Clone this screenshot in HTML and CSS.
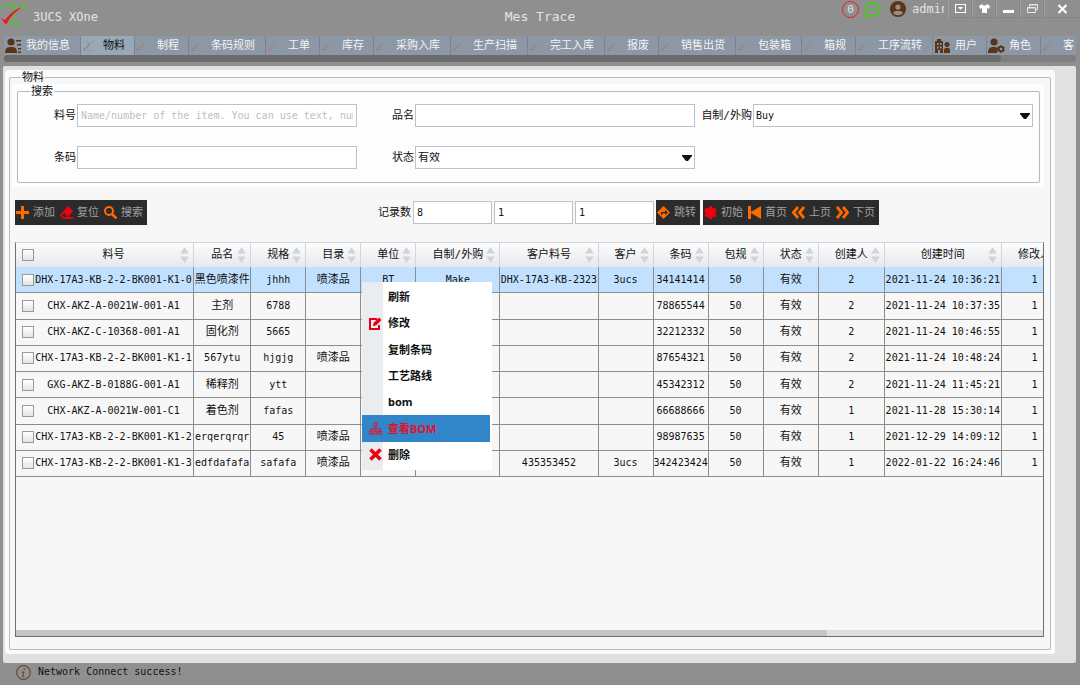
FILE: index.html
```html
<!DOCTYPE html>
<html lang="zh-CN">
  <head>
    <meta charset="utf-8" />
    <title>Mes Trace</title>
    <meta name="viewport" content="width=device-width,initial-scale=1" />
    <link rel="stylesheet" href="styles.css">
  </head>
  <body>
    <!-- Shared icons -->
    <svg class="sprite" aria-hidden="true">
      <symbol id="i-logo" viewBox="0 0 26 24">
        <path d="M1 6C4 2 10 0 12 2c1 3 2 5 0 10-2 6-2 9 1 10 3 0 5-2 6-4" fill="none" stroke="var(--leaf, #52c234)" stroke-width="1.800"/>
        <path d="M12 10C13 6 17 3 21 2" fill="none" stroke="var(--leaf, #52c234)" stroke-width="1.200"/>
        <path d="M20 3h6M23 0v5M21 4l3 2" fill="none" stroke="var(--leaf, #52c234)" stroke-width="1"/>
        <path d="M0 15l4 2C9 11 14 6 21 4 14 9 8 15 5 22z" fill="var(--tick, #f01818)"/>
      </symbol>
      <symbol id="i-sort" viewBox="0 0 9 17">
        <path d="M4.500 0L9 7H0zM0 10h9l-4.500 7z" fill="#d3d3d5"/>
      </symbol>
      <symbol id="i-down" viewBox="0 0 10 6"><path d="M0 0h10v1L6 6H4L0 1z" fill="#111"/></symbol>
    </svg>

    <!-- Title bar -->
    <header class="titlebar">
      <div class="titlebar__brand">
        <svg class="titlebar__logo"><use href="#i-logo"/></svg>
        <span>3UCS XOne</span>
      </div>
      <h1 class="titlebar__title">Mes Trace</h1>
      <div class="titlebar__tools">
        <span class="count">0</span>
        <svg width="17" height="17" viewBox="0 0 17 17"><path d="M1 15l1-3C0 6 3 2 8.500 2 13 2 16 5 16 8.500S13 15 8.500 15z" fill="none" stroke="#4fc62c" stroke-width="1.800"/><circle cx="5" cy="8.500" r="1.200" fill="#4fc62c"/><circle cx="8.500" cy="8.500" r="1.200" fill="#4fc62c"/><circle cx="12" cy="8.500" r="1.200" fill="#4fc62c"/></svg>
        <svg class="avatar" width="16" height="16" viewBox="0 0 16 16"><circle cx="8" cy="8" r="8" fill="#5b3416"/><circle cx="8" cy="6" r="2.600" fill="#9a8c80"/><path d="M3 12c1-3 9-3 10 0-2 3-8 3-10 0z" fill="#9a8c80"/></svg>
        <span class="user">admin</span>
        <button class="win" aria-label="Menu"><svg width="11" height="9" viewBox="0 0 11 9"><rect x=".5" y=".5" width="10" height="8" fill="none" stroke="#fff"/><path d="M3 3h5L5.500 6z" fill="#fff"/></svg></button>
        <button class="win" aria-label="Skin"><svg width="11" height="9" viewBox="0 0 11 9"><path d="M3 0c1 2 4 2 5 0l3 2-1 3-2-1v5H3V4L1 5 0 2z" fill="#fff"/></svg></button>
        <button class="win" aria-label="Minimize"><svg width="11" height="9" viewBox="0 0 11 9"><path d="M0 6h11v3H0z" fill="#fff"/></svg></button>
        <button class="win" aria-label="Restore"><svg width="11" height="9" viewBox="0 0 11 9"><path d="M2.500 3V.5h8v5H9M2 1h9M.5 3.500h8v5h-8zM0 4h9" fill="none" stroke="#e6e6e6"/></svg></button>
        <button class="win win--close" aria-label="Close"><svg width="11" height="10" viewBox="0 0 11 10"><path d="M1.500 1l8 8M9.500 1l-8 8" stroke="#fff" stroke-width="2"/></svg></button>
      </div>
    </header>

    <!-- Module tabs -->
    <nav class="tabs">
      <a href="#" class="tab tab--wide"><svg class="tab__icon tab__icon--full" viewBox="0 0 17 16"><g fill="#5b3416"><circle cx="6" cy="4" r="3.600"/><path d="M0 15c0-5 2-6 6-6s6 1 6 6zM11 2h5v1.500h-5zM12 6h4v1.500h-4zM13 10h3v1.500h-3zM13 13.500h3V15h-3z"/></g></svg>我的信息</a>
      <a href="#" class="tab tab--active"><svg class="tab__icon"><use href="#i-logo"/></svg>物料</a>
      <a href="#" class="tab"><svg class="tab__icon"><use href="#i-logo"/></svg>制程</a>
      <a href="#" class="tab tab--wide"><svg class="tab__icon"><use href="#i-logo"/></svg>条码规则</a>
      <a href="#" class="tab"><svg class="tab__icon"><use href="#i-logo"/></svg>工单</a>
      <a href="#" class="tab"><svg class="tab__icon"><use href="#i-logo"/></svg>库存</a>
      <a href="#" class="tab tab--wide"><svg class="tab__icon"><use href="#i-logo"/></svg>采购入库</a>
      <a href="#" class="tab tab--wide"><svg class="tab__icon"><use href="#i-logo"/></svg>生产扫描</a>
      <a href="#" class="tab tab--wide"><svg class="tab__icon"><use href="#i-logo"/></svg>完工入库</a>
      <a href="#" class="tab"><svg class="tab__icon"><use href="#i-logo"/></svg>报废</a>
      <a href="#" class="tab tab--wide"><svg class="tab__icon"><use href="#i-logo"/></svg>销售出货</a>
      <a href="#" class="tab tab--wide"><svg class="tab__icon"><use href="#i-logo"/></svg>包装箱</a>
      <a href="#" class="tab"><svg class="tab__icon"><use href="#i-logo"/></svg>箱规</a>
      <a href="#" class="tab tab--wide"><svg class="tab__icon"><use href="#i-logo"/></svg>工序流转</a>
      <a href="#" class="tab"><svg class="tab__icon tab__icon--full" viewBox="0 0 17 16"><path d="M1 15V3h2V1h4v2h2v12z" fill="#5b3416"/><path d="M3 5h1.500v2H3zM6 5h1.500v2H6zM3 8.500h1.500v2H3zM6 8.500h1.500v2H6zM4 12h2v3H4z" fill="#8e9baa"/><g fill="#5b3416"><circle cx="13" cy="6.500" r="2.500"/><path d="M10 15v-3c0-3 6-3 6 0v3z"/></g></svg>用户</a>
      <a href="#" class="tab"><svg class="tab__icon tab__icon--full" viewBox="0 0 17 16"><g fill="#5b3416"><circle cx="6" cy="4" r="3.600"/><path d="M0 15c0-5 2-6 6-6 2 0 3 .5 4 1.500L9 15z"/></g><circle cx="13" cy="11" r="2.300" fill="none" stroke="#5b3416" stroke-width="2"/><path d="M13 7v8M9.500 9l7 4M9.500 13l7-4" stroke="#5b3416" stroke-width="1.200"/><circle cx="13" cy="11" r="1.300" fill="#8e9baa"/></svg>角色</a>
      <a href="#" class="tab"><svg class="tab__icon"><use href="#i-logo"/></svg>客</a>
    </nav>
    <div class="tabs-scroll"><div class="tabs-scroll__thumb"></div></div>

    <main class="panel">
      <div class="frame">
        <fieldset class="group group--main">
          <legend>物料</legend>

          <!-- Search form -->
          <div class="search-wrap">
            <fieldset class="group">
              <legend>搜索</legend>
              <div class="search">
                <label for="item-no">料号</label>
                <input class="field" id="item-no" type="text" placeholder="Name/number of the item. You can use text, numbers">
                <label for="item-name">品名</label>
                <input class="field" id="item-name" type="text">
                <label for="source">自制/外购</label>
                <div class="select">
                  <select class="field" id="source"><option>Buy</option><option>Make</option></select>
                  <svg class="select__arrow"><use href="#i-down"/></svg>
                </div>
                <label for="barcode">条码</label>
                <input class="field" id="barcode" type="text">
                <label for="status">状态</label>
                <div class="select">
                  <select class="field field--zh" id="status"><option>有效</option><option>无效</option></select>
                  <svg class="select__arrow"><use href="#i-down"/></svg>
                </div>
              </div>
            </fieldset>
          </div>

          <!-- Toolbar -->
          <div class="toolbar">
            <div class="btns">
              <button class="btn"><svg class="btn__icon" viewBox="0 0 13 13"><path d="M5 0h3v5h5v3H8v5H5V8H0V5h5z" fill="#ff6a00"/></svg>添加</button>
              <button class="btn"><svg class="btn__icon" viewBox="0 0 13 13"><path d="M8 0l5 5-5 6h5v2H3L0 9z" fill="#f0000c"/><path d="M4 7l3 3-1.500 1.500H4L2 9.500z" fill="#2b2b2b"/></svg>复位</button>
              <button class="btn"><svg class="btn__icon" viewBox="0 0 13 13"><circle cx="5" cy="5" r="4" fill="none" stroke="#ff6a00" stroke-width="2"/><path d="M8 8l4.500 4.500" stroke="#ff6a00" stroke-width="2.500"/></svg>搜索</button>
            </div>
            <div class="pager">
              <label for="total">记录数</label>
              <input class="field" id="total" type="text" value="8">
              <input class="field" type="text" value="1" aria-label="页数">
              <input class="field" type="text" value="1" aria-label="页码">
              <div class="btns">
                <button class="btn"><svg class="btn__icon" viewBox="0 0 13 13"><path d="M6.500 0L13 6.500 6.500 13 0 6.500z" fill="#ff6a00"/><path d="M4 9V6h4V4l3 2.500L8 9V7.200H5.300V9z" fill="#2b2b2b"/></svg>跳转</button>
              </div>
            </div>
            <div class="btns">
              <button class="btn"><svg class="btn__icon" viewBox="0 0 13 13"><circle cx="6.500" cy="6.500" r="5.200" fill="#f0000c"/><path d="M6.500 0v13M1 3l11 7M1 10l11-7" stroke="#f0000c" stroke-width="3"/></svg>初始</button>
              <button class="btn"><svg class="btn__icon" viewBox="0 0 13 13"><path d="M0 0h3v6l10-6v13L3 7v6H0z" fill="#ff6a00"/></svg>首页</button>
              <button class="btn"><svg class="btn__icon" viewBox="0 0 13 13"><path d="M6 1L1.500 6.500 6 12M12 1L7.500 6.500 12 12" fill="none" stroke="#ff6a00" stroke-width="2.800"/></svg>上页</button>
              <button class="btn"><svg class="btn__icon" viewBox="0 0 13 13"><path d="M1 1l4.500 5.500L1 12M7 1l4.500 5.500L7 12" fill="none" stroke="#ff6a00" stroke-width="2.800"/></svg>下页</button>
            </div>
          </div>

          <!-- Item list -->
          <div class="grid">
            <div class="grid__view">
              <table class="table">
                <colgroup>
                  <col class="c-no"><col class="c-name"><col class="c-s"><col class="c-s"><col class="c-s"><col class="c-make"><col class="c-cust"><col class="c-s"><col class="c-s"><col class="c-s"><col class="c-s"><col class="c-by"><col class="c-time"><col class="c-by">
                </colgroup>
                <thead>
                  <tr>
                    <th class="pick"><span><input type="checkbox" aria-label="全选"><b>料号</b></span><svg class="sort"><use href="#i-sort"/></svg></th>
                    <th>品名<svg class="sort"><use href="#i-sort"/></svg></th>
                    <th>规格<svg class="sort"><use href="#i-sort"/></svg></th>
                    <th>目录<svg class="sort"><use href="#i-sort"/></svg></th>
                    <th>单位<svg class="sort"><use href="#i-sort"/></svg></th>
                    <th>自制/外购<svg class="sort"><use href="#i-sort"/></svg></th>
                    <th>客户料号<svg class="sort"><use href="#i-sort"/></svg></th>
                    <th>客户<svg class="sort"><use href="#i-sort"/></svg></th>
                    <th>条码<svg class="sort"><use href="#i-sort"/></svg></th>
                    <th>包规<svg class="sort"><use href="#i-sort"/></svg></th>
                    <th>状态<svg class="sort"><use href="#i-sort"/></svg></th>
                    <th>创建人<svg class="sort"><use href="#i-sort"/></svg></th>
                    <th>创建时间<svg class="sort"><use href="#i-sort"/></svg></th>
                    <th>修改人</th>
                  </tr>
                </thead>
                <tbody>
                  <tr class="selected"><td class="pick"><label><input type="checkbox"><b>DHX-17A3-KB-2-2-BK001-K1-0</b></label></td><td class="zh">黑色喷漆件</td><td>jhhh</td><td class="zh">喷漆品</td><td>BT</td><td>Make</td><td>DHX-17A3-KB-2323</td><td>3ucs</td><td>34141414</td><td>50</td><td class="zh">有效</td><td>2</td><td>2021-11-24 10:36:21</td><td>1</td></tr>
                  <tr><td class="pick"><label><input type="checkbox"><b>CHX-AKZ-A-0021W-001-A1</b></label></td><td class="zh">主剂</td><td>6788</td><td></td><td></td><td></td><td></td><td></td><td>78865544</td><td>50</td><td class="zh">有效</td><td>2</td><td>2021-11-24 10:37:35</td><td>1</td></tr>
                  <tr><td class="pick"><label><input type="checkbox"><b>CHX-AKZ-C-10368-001-A1</b></label></td><td class="zh">固化剂</td><td>5665</td><td></td><td></td><td></td><td></td><td></td><td>32212332</td><td>50</td><td class="zh">有效</td><td>2</td><td>2021-11-24 10:46:55</td><td>1</td></tr>
                  <tr><td class="pick"><label><input type="checkbox"><b>CHX-17A3-KB-2-2-BK001-K1-1</b></label></td><td>567ytu</td><td>hjgjg</td><td class="zh">喷漆品</td><td></td><td></td><td></td><td></td><td>87654321</td><td>50</td><td class="zh">有效</td><td>2</td><td>2021-11-24 10:48:24</td><td>1</td></tr>
                  <tr><td class="pick"><label><input type="checkbox"><b>GXG-AKZ-B-0188G-001-A1</b></label></td><td class="zh">稀释剂</td><td>ytt</td><td></td><td></td><td></td><td></td><td></td><td>45342312</td><td>50</td><td class="zh">有效</td><td>2</td><td>2021-11-24 11:45:21</td><td>1</td></tr>
                  <tr><td class="pick"><label><input type="checkbox"><b>CHX-AKZ-A-0021W-001-C1</b></label></td><td class="zh">着色剂</td><td>fafas</td><td></td><td></td><td></td><td></td><td></td><td>66688666</td><td>50</td><td class="zh">有效</td><td>1</td><td>2021-11-28 15:30:14</td><td>1</td></tr>
                  <tr><td class="pick"><label><input type="checkbox"><b>CHX-17A3-KB-2-2-BK001-K1-2</b></label></td><td>erqerqrqr</td><td>45</td><td class="zh">喷漆品</td><td></td><td></td><td></td><td></td><td>98987635</td><td>50</td><td class="zh">有效</td><td>1</td><td>2021-12-29 14:09:12</td><td>1</td></tr>
                  <tr><td class="pick"><label><input type="checkbox"><b>CHX-17A3-KB-2-2-BK001-K1-3</b></label></td><td>edfdafafa</td><td>safafa</td><td class="zh">喷漆品</td><td></td><td></td><td>435353452</td><td>3ucs</td><td>342423424</td><td>50</td><td class="zh">有效</td><td>1</td><td>2022-01-22 16:24:46</td><td>1</td></tr>
                </tbody>
              </table>
            </div>
            <div class="grid__scroll"><div class="grid__thumb"></div></div>

            <!-- Context menu -->
            <div class="menu" role="menu">
              <button class="menu__item" role="menuitem"><span class="menu__icon"></span>刷新</button>
              <button class="menu__item" role="menuitem"><span class="menu__icon"><svg width="13" height="13" viewBox="0 0 13 13"><path d="M8 2H1v10h9V8" fill="none" stroke="#e60012" stroke-width="2"/><path d="M4 9l.5-3L10 .5 12.500 3 7 8.500z" fill="#e60012"/></svg></span>修改</button>
              <button class="menu__item" role="menuitem"><span class="menu__icon"></span>复制条码</button>
              <button class="menu__item" role="menuitem"><span class="menu__icon"></span>工艺路线</button>
              <button class="menu__item" role="menuitem"><span class="menu__icon"></span>bom</button>
              <button class="menu__item menu__item--active" role="menuitem"><span class="menu__icon"><svg width="13" height="13" viewBox="0 0 13 13"><g fill="none" stroke="#d0203c" stroke-width="1.200"><rect x="5" y="1" width="3" height="3"/><path d="M6.500 4v5M2 9V6.500h9V9"/><rect x=".6" y="9" width="2.800" height="3"/><rect x="5.100" y="9" width="2.800" height="3"/><rect x="9.600" y="9" width="2.800" height="3"/></g></svg></span>查看BOM</button>
              <button class="menu__item" role="menuitem"><span class="menu__icon"><svg width="13" height="13" viewBox="0 0 13 13"><path d="M1.500 1.500l10 10M11.500 1.500l-10 10" stroke="#f0000c" stroke-width="3.600"/></svg></span>删除</button>
            </div>
          </div>
        </fieldset>
      </div>
    </main>

    <footer class="status">
      <svg width="15" height="15" viewBox="0 0 15 15"><circle cx="7.500" cy="7.500" r="6.800" fill="none" stroke="#6b4a2c" stroke-width="1.200"/><path d="M8 3.500h1.500L9 5H7.600zM6 6.500h2.600L7.500 11h1L8 12H6l1-4H5.800z" fill="#6b4a2c"/></svg>
      <span>Network Connect success!</span>
    </footer>
  </body>
</html>
```
FILE: styles.css
```css
/* Base */
html { box-sizing: border-box; }
*, *:before, *:after { box-sizing: inherit; }
body {
  margin: 0;
  min-height: 100vh;
  display: flex;
  flex-direction: column;
  overflow-x: hidden;
  background: #8f8f8f;
  color: #111;
  font: 11px/12px "DejaVu Sans Mono", "Noto Sans CJK SC", monospace;
}
a { text-decoration: none; }
button, input, select {
  font: inherit;
  color: inherit;
  margin: 0;
}
button {
  border: 0;
  padding: 0;
  background: none;
}
.sprite {
  position: absolute;
  width: 0;
  height: 0;
}

/* Title bar */
.titlebar {
  display: grid;
  grid-template-columns: 1fr auto 1fr;
  height: 36px;
  color: #e4e4e4;
}
.titlebar__brand {
  display: flex;
  align-items: center;
  gap: 6px;
  padding: 0 0 6px 1px;
  font-size: 12px;
}
.titlebar__brand span { padding-top: 4px; }
.titlebar__logo {
  width: 26px;
  height: 24px;
}
.titlebar__title {
  margin: 0;
  font-size: 13px;
  font-weight: normal;
  line-height: 34px;
}
.titlebar__tools {
  display: flex;
  justify-content: flex-end;
  align-items: center;
  height: 18px;
}
.count {
  width: 17px;
  height: 17px;
  margin-right: 5px;
  border: 1px solid #f01818;
  border-radius: 50%;
  text-align: center;
  line-height: 15px;
}
.avatar { margin: 0 6px 0 9px; }
.user {
  width: 32px;
  margin-right: 4px;
  overflow: hidden;
  font-size: 12px;
}
.win {
  width: 24px;
  height: 18px;
  display: flex;
  align-items: center;
  justify-content: center;
  border: 1px solid #868686;
  border-left-color: #a2a2a2;
  border-top: 0;
}
.win--close {
  width: 36px;
  border-right: 0;
}

/* Tabs */
.tabs {
  display: flex;
  height: 19px;
  margin: 0 4px;
  overflow: hidden;
}
.tab {
  flex: none;
  display: flex;
  align-items: center;
  padding-right: 9px;
  background: #8c98a5;
  border-right: 1px solid #7a838e;
  color: #f4f4f4;
}
.tab--wide { padding-right: 10px; }
.tab--active {
  background: #98a8b9;
  color: #111;
}
.tab__icon {
  --leaf: #84a08c;
  --tick: #b07a80;
  width: 13px;
  height: 13px;
  margin: 2px 8px 0 1px;
}
.tab__icon--full {
  width: 17px;
  height: 16px;
  margin: 1px 4px 0 1px;
}
.tabs-scroll {
  height: 7px;
  margin: 0 4px 4px;
  border-radius: 4px;
  background: #7f7f7f;
}
.tabs-scroll__thumb {
  width: 93%;
  height: 7px;
  border-radius: 4px;
  background: #6b6b6b;
}

/* Panel */
.panel {
  flex: 1;
  display: flex;
  margin: 0 4px 0 3px;
  padding: 4px 21px 9px 2px;
  background: #e1e1e1;
  border-radius: 2px;
}
.frame {
  flex: 1;
  min-width: 0;
  display: flex;
  padding: 0 4px 4px;
  background: #fbfbfb;
  border-radius: 3px;
}
.group {
  min-width: 0;
  margin: 0;
  padding: 0;
  border: 1px solid #b3bac2;
  border-radius: 2px;
}
.group legend {
  margin-left: 12px;
  padding: 2px 1px 0;
  line-height: 12px;
}
.group--main {
  flex: 1;
  display: flex;
  flex-direction: column;
  padding: 0 6px 12px 3px;
  background: #f7f7f7;
}
.group--main > legend { margin-left: 8px; }

/* Search form */
.search-wrap {
  padding: 0 4px 4px;
  background: #fdfdfd;
}
.search {
  display: grid;
  grid-template-columns: 59px 1fr 58px 1fr 58px 1fr;
  row-gap: 19px;
  align-items: center;
  padding: 6px 6px 13px 0;
}
.search label {
  padding-right: 1px;
  text-align: right;
  white-space: nowrap;
}
.field {
  width: 100%;
  height: 23px;
  padding: 0 3px;
  border: 1px solid #bcc2c7;
  border-radius: 0;
  background: #fff;
  font-size: 10px;
  outline: 0;
}
.field::placeholder {
  color: #b9c0c6;
  opacity: 1;
}
.field--zh { font-size: 11px; }
.select { position: relative; }
.select .field {
  display: block;
  appearance: none;
  padding: 0 2px;
}
.select__arrow {
  position: absolute;
  right: 3px;
  top: 9px;
  width: 10px;
  height: 6px;
  pointer-events: none;
}

/* Toolbar */
.toolbar {
  display: flex;
  align-items: center;
  gap: 3px;
  padding: 13px 0 17px 2px;
}
.btns {
  display: flex;
  height: 25px;
  background: #2b2b2b;
}
.btn {
  display: flex;
  align-items: center;
  width: 44px;
  gap: 4px;
  padding-left: 1px;
  color: #a0a0a0;
  white-space: nowrap;
}
.btn__icon {
  width: 13px;
  height: 13px;
}
.pager {
  display: flex;
  align-items: center;
  gap: 2px;
  margin-left: 228px;
}
.pager .field { width: 79px; }

/* Item list */
.grid {
  position: relative;
  flex: 1;
  display: flex;
  flex-direction: column;
  margin-left: 2px;
  border: 1px solid #707070;
  border-top-color: #ccd5dd;
}
.grid__view {
  flex: 1;
  overflow: hidden;
}
.grid__scroll {
  height: 6px;
  background: #dedede;
}
.grid__thumb {
  width: 79%;
  height: 6px;
  border-radius: 0 3px 0 0;
  background: #c4c4c4;
}
.table {
  width: 1052px;
  height: 234px;
  table-layout: fixed;
  border-collapse: separate;
  border-spacing: 0;
}
.c-no { width: 178px; }
.c-name { width: 57px; }
.c-s { width: 55px; }
.c-make { width: 84px; }
.c-cust { width: 98px; }
.c-by { width: 66px; }
.c-time { width: 117px; }
.table th, .table td {
  padding: 0;
  overflow: hidden;
  text-align: center;
  white-space: nowrap;
}
.table th {
  position: relative;
  height: 24px;
  background: linear-gradient(#fdfdfd, #e6e8ec);
  border-right: 1px solid #cfd6dc;
  font-weight: normal;
}
.table td {
  border-right: 1px solid #8c8c8c;
  border-bottom: 1px solid #8c8c8c;
  font-size: 10px;
}
.table .zh { font-size: 11px; }
.table .selected td { background: #c1e1ff; }
.pick label, .pick span {
  display: flex;
  align-items: center;
  padding-left: 6px;
}
.pick b {
  flex: 1;
  font-weight: normal;
}
.pick input {
  appearance: none;
  width: 12px;
  height: 12px;
  border: 1px solid #999;
  background: linear-gradient(#fff, #e4e4e4);
}
.sort {
  position: absolute;
  right: 4px;
  top: 4px;
  width: 9px;
  height: 16px;
}

/* Context menu */
.menu {
  position: absolute;
  left: 346px;
  top: 39px;
  width: 130px;
  height: 188px;
  display: flex;
  flex-direction: column;
  padding: 2px 2px 2px 0;
  background: linear-gradient(90deg, #e9edf0 21px, #fff 21px);
}
.menu__item {
  flex: 1;
  display: flex;
  align-items: center;
  font: bold 11px/12px "Noto Sans", "Noto Sans CJK SC", sans-serif;
  color: #111;
}
.menu__item--active {
  background: #3186ca;
  color: #e0102a;
}
.menu__icon {
  width: 26px;
  height: 13px;
  padding-left: 7px;
  text-align: left;
}

/* Status bar */
.status {
  display: flex;
  align-items: center;
  gap: 7px;
  height: 22px;
  padding: 0 16px 4px;
  font-size: 10px;
}
```
